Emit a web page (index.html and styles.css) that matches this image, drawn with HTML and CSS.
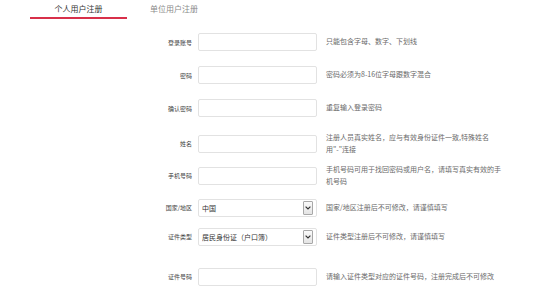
FILE: index.html
```html
<!DOCTYPE html>
<html lang="zh-CN">
<head>
<meta charset="utf-8">
<title>用户注册</title>
<link rel="stylesheet" href="styles.css">
</head>
<body>
<div class="page">
  <div class="tabs">
    <div class="tab active">个人用户注册</div>
    <div class="tab">单位用户注册</div>
  </div>
  <form class="form">
    <div class="row first">
      <label class="label">登录账号</label>
      <input class="field" type="text">
      <div class="hint">只能包含字母、数字、下划线</div>
    </div>
    <div class="row">
      <label class="label">密码</label>
      <input class="field" type="password">
      <div class="hint">密码必须为8-16位字母跟数字混合</div>
    </div>
    <div class="row">
      <label class="label">确认密码</label>
      <input class="field" type="password">
      <div class="hint">重复输入登录密码</div>
    </div>
    <div class="row mid">
      <label class="label">姓名</label>
      <input class="field" type="text">
      <div class="hint">注册人员真实姓名，应与有效身份证件一致,特殊姓名<br>用"-"连接</div>
    </div>
    <div class="row snug">
      <label class="label">手机号码</label>
      <input class="field" type="text">
      <div class="hint">手机号码可用于找回密码或用户名，请填写真实有效的手<br>机号码</div>
    </div>
    <div class="row snug">
      <label class="label">国家/地区</label>
      <div class="select-wrap">
        <select class="field select"><option>中国</option></select>
        <span class="arrow"><svg viewBox="0 0 6 4" width="6" height="4"><path d="M0.6 0.6 L3 3 L5.4 0.6" fill="none" stroke="#333" stroke-width="1.2"/></svg></span>
      </div>
      <div class="hint">国家/地区注册后不可修改，请谨慎填写</div>
    </div>
    <div class="row tight">
      <label class="label">证件类型</label>
      <div class="select-wrap">
        <select class="field select"><option>居民身份证（户口簿）</option></select>
        <span class="arrow"><svg viewBox="0 0 6 4" width="6" height="4"><path d="M0.6 0.6 L3 3 L5.4 0.6" fill="none" stroke="#333" stroke-width="1.2"/></svg></span>
      </div>
      <div class="hint">证件类型注册后不可修改，请谨慎填写</div>
    </div>
    <div class="row loose">
      <label class="label">证件号码</label>
      <input class="field" type="text">
      <div class="hint">请输入证件类型对应的证件号码，注册完成后不可修改</div>
    </div>
  </form>
</div>
</body>
</html>
```
FILE: styles.css
```css
html, body {
  margin: 0;
  padding: 0;
  background: #fff;
}
body {
  font-family: "Noto Sans CJK SC", "Noto Sans", sans-serif;
  color: #333;
}
.page {
  width: 554px;
}
.tabs {
  display: flex;
  padding-left: 30px;
}
.tab {
  font-size: 8px;
  line-height: 12px;
  padding-top: 3px;
  padding-bottom: 1.5px;
  color: #8a8a8a;
  margin-left: 23px;
}
.tab.active {
  width: 97px;
  margin-left: 0;
  text-align: center;
  color: #333;
  border-bottom: 2px solid #d8304a;
}
.form {
  display: flex;
  flex-direction: column;
  margin: 0;
}
.row {
  display: flex;
  align-items: center;
  height: 18px;
  margin-top: 15px;
}
.row.first { margin-top: 14.5px; }
.row.mid { margin-top: 17.5px; }
.row.snug { margin-top: 14px; }
.row.tight { margin-top: 11px; }
.row.loose { margin-top: 22px; }
.label {
  width: 192px;
  text-align: right;
  font-size: 6px;
  color: #444;
  flex: none;
}
.field {
  box-sizing: border-box;
  width: 119px;
  height: 18px;
  margin: 0 0 0 6px;
  border: 1px solid #e2e2e2;
  border-radius: 2px;
  background: #fff;
  padding: 0 4px;
  flex: none;
  font-family: inherit;
  font-size: 7px;
  color: #333;
  outline: none;
}
.select-wrap {
  position: relative;
  flex: none;
  height: 18px;
}
.select {
  appearance: none;
  -webkit-appearance: none;
  padding-left: 3px;
  display: block;
}
.arrow {
  position: absolute;
  right: 4px;
  top: 2px;
  width: 10px;
  height: 14px;
  box-sizing: border-box;
  border: 1px solid #a8a8a8;
  border-radius: 1px;
  background: linear-gradient(#fafafa, #e4e4e4);
  display: flex;
  align-items: center;
  justify-content: center;
}
.hint {
  margin-left: 9px;
  width: 190px;
  font-size: 7px;
  line-height: 11.5px;
  color: #6a6a6a;
  flex: none;
}
```
